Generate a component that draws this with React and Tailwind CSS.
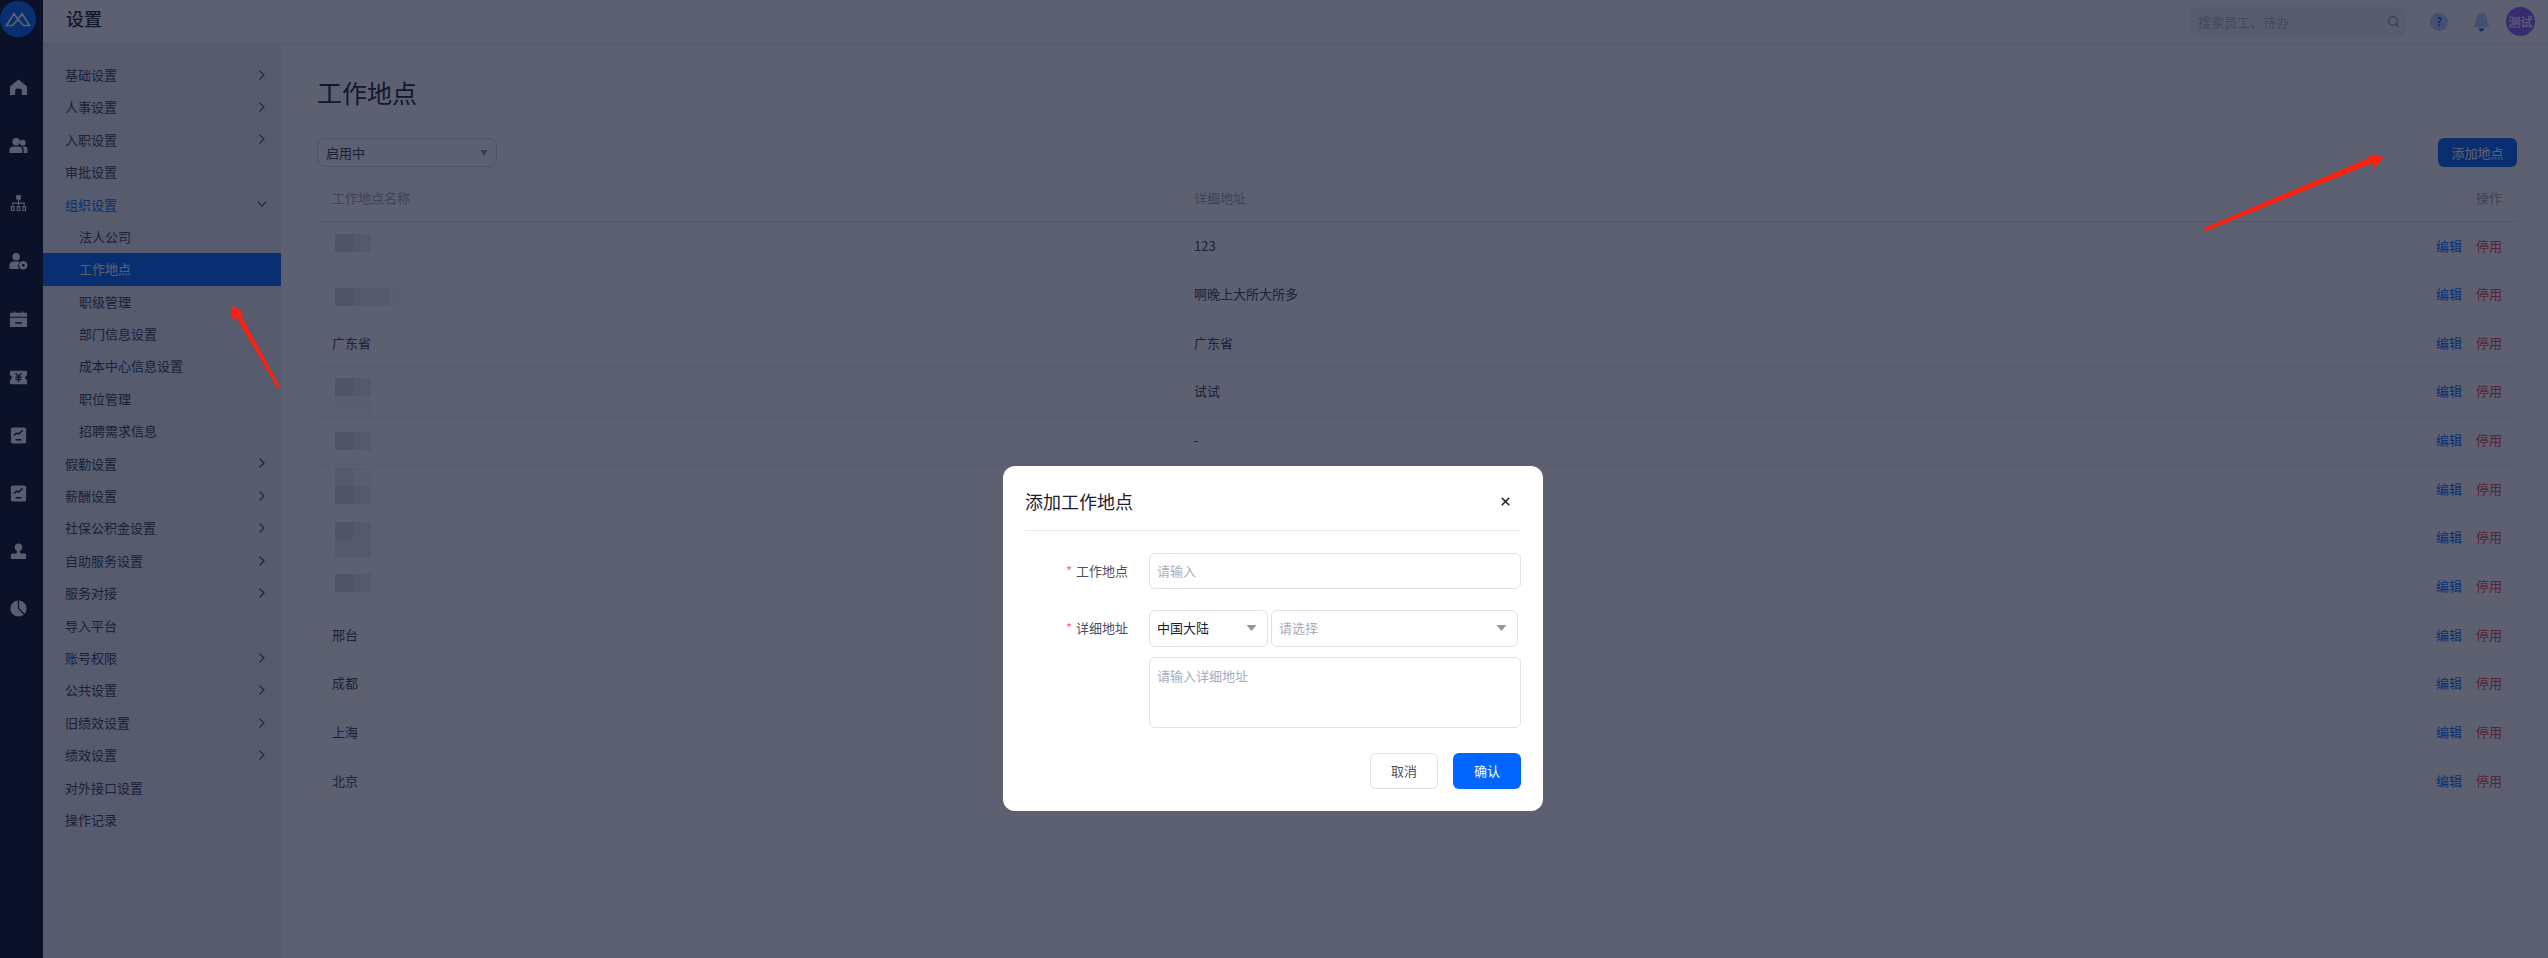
import { ChevronRight, ChevronDown, Search, X } from "lucide-react";

const menu = [
  { label: "基础设置", arrow: true },
  { label: "人事设置", arrow: true },
  { label: "入职设置", arrow: true },
  { label: "审批设置" },
  { label: "组织设置", open: true },
  { label: "法人公司", sub: true },
  { label: "工作地点", sub: true, active: true },
  { label: "职级管理", sub: true },
  { label: "部门信息设置", sub: true },
  { label: "成本中心信息设置", sub: true },
  { label: "职位管理", sub: true },
  { label: "招聘需求信息", sub: true },
  { label: "假勤设置", arrow: true },
  { label: "薪酬设置", arrow: true },
  { label: "社保公积金设置", arrow: true },
  { label: "自助服务设置", arrow: true },
  { label: "服务对接", arrow: true },
  { label: "导入平台" },
  { label: "账号权限", arrow: true },
  { label: "公共设置", arrow: true },
  { label: "旧绩效设置", arrow: true },
  { label: "绩效设置", arrow: true },
  { label: "对外接口设置" },
  { label: "操作记录" },
];

const D = "bg-[#d6d8dc]";
const M = "bg-[#e6e9ec]";
const F = "bg-[#f7f8f8]";

// addresses of the lower rows sit behind the dialog
const rows = [
  { address: "123", mask: [[D, M]], top: "top-[12px]" },
  { address: "啊晚上大所大所多", mask: [[D, M, M, F]], top: "top-[17px]" },
  { name: "广东省", address: "广东省" },
  { address: "试试", mask: [[D, M], [F, F]], top: "top-[10px]" },
  { address: "-", mask: [[D, M]], top: "top-[15px]" },
  { mask: [[M, F], [D, M]], top: "top-[3px]" },
  { mask: [[D, M], [M, M]], top: "top-[8px]" },
  { mask: [[D, M]], top: "top-[12px]" },
  { name: "邢台" },
  { name: "成都" },
  { name: "上海" },
  { name: "北京" },
];

function RailIcon({ children }) {
  return (
    <div className="h-[57.9px] flex items-center justify-center">
      <svg width="19" height="19" viewBox="0 0 20 20" fill="#f3f5fb">
        {children}
      </svg>
    </div>
  );
}

function Rail() {
  const cut = "#020a1e";
  return (
    <div className="w-[43px] shrink-0 bg-[#020a1e] flex flex-col pr-[7px]">
      <div className="w-[36px] h-[36px] mt-[1px] rounded-full bg-[#0066ff] flex items-center justify-center">
        <svg width="26" height="16" viewBox="0 0 26 16" fill="none" stroke="#fff" strokeWidth="1.7">
          <path d="M1.5 14.5 L9 2.5 L13 8.5 L17 2.5 L24.5 14.5 H18.5 L13 8.5 L7.5 14.5 Z" />
        </svg>
      </div>
      <div className="mt-[22px] flex flex-col">
        <RailIcon>
          <path d="M10 1.5 L18.5 8.5 Q19 9 19 10 V17 Q19 18 18 18 H13.5 V13.5 Q13.5 11 10 11 Q6.5 11 6.5 13.5 V18 H2 Q1 18 1 17 V10 Q1 9 1.5 8.5 Z" />
        </RailIcon>
        <RailIcon>
          <circle cx="7.5" cy="6" r="4" />
          <path d="M0.5 18 V15 Q0.5 11 5 11 H10 Q14 11 14 15 V18 Z" />
          <circle cx="14.5" cy="7" r="3" />
          <path d="M15.5 18 V14.5 Q15.5 12 13.5 11 H16 Q19.5 11 19.5 14.5 V18 Z" />
        </RailIcon>
        <RailIcon>
          <rect x="7.5" y="1" width="5" height="5" rx="1" />
          <path d="M9.4 6 H10.6 V9 H16.6 V12 H15.4 V10.2 H10.6 V12 H9.4 V10.2 H4.6 V12 H3.4 V9 H9.4 Z" />
          <path d="M2 12.5 H6 V18 H2 Z M3.2 14 V16.8 H4.8 V14 Z M8 12.5 H12 V18 H8 Z M9.2 14 V16.8 H10.8 V14 Z M14 12.5 H18 V18 H14 Z M15.2 14 V16.8 H16.8 V14 Z" fillRule="evenodd" />
        </RailIcon>
        <RailIcon>
          <circle cx="7.5" cy="5" r="4" />
          <path d="M0.5 18 V14 Q0.5 10 5 10 H10 Q11 10 11.5 10.5 Q9.5 12 9.5 14.5 Q9.5 16.5 11 18 Z" />
          <circle cx="15" cy="14" r="4.5" />
          <circle cx="15" cy="14" r="1.5" fill={cut} />
        </RailIcon>
        <RailIcon>
          <path d="M2 3 H5 V1.5 H6.5 V3 H13.5 V1.5 H15 V3 H18 Q19 3 19 4 V7 H1 V4 Q1 3 2 3 Z" />
          <path d="M1 8.2 H19 V17 Q19 18 18 18 H2 Q1 18 1 17 Z M6.5 13 V14.5 H13.5 V13 Z" fillRule="evenodd" />
        </RailIcon>
        <RailIcon>
          <path d="M1 4 Q1 3 2 3 H18 Q19 3 19 4 V7.5 Q17 8.2 17 10 Q17 11.8 19 12.5 V16 Q19 17 18 17 H2 Q1 17 1 16 V12.5 Q3 11.8 3 10 Q3 8.2 1 7.5 Z" />
          <path d="M7 5.5 L10 9 L13 5.5 M6.8 9.5 H13.2 M6.8 12 H13.2 M10 9 V15" fill="none" stroke={cut} strokeWidth="1.3" />
        </RailIcon>
        <RailIcon>
          <rect x="2" y="1.5" width="16" height="17" rx="2" />
          <path d="M5 10 L8 7.5 L10 8.5 L14.5 4.5 M7 14.5 H13" fill="none" stroke={cut} strokeWidth="1.5" />
        </RailIcon>
        <RailIcon>
          <rect x="2" y="1.5" width="16" height="17" rx="2" />
          <path d="M5 10 L8 7.5 L10 8.5 L14.5 4.5 M7 14.5 H13" fill="none" stroke={cut} strokeWidth="1.5" />
        </RailIcon>
        <RailIcon>
          <circle cx="10" cy="5.5" r="4" />
          <path d="M8.5 8 H11.5 L12 12 H16.5 Q18 12 18 13.5 V17 Q18 18 17 18 H3 Q2 18 2 17 V13.5 Q2 12 3.5 12 H8 Z" />
        </RailIcon>
        <RailIcon>
          <circle cx="10" cy="10" r="8.5" />
          <path d="M10 1.5 V10 L16 16" fill="none" stroke={cut} strokeWidth="1.3" />
        </RailIcon>
      </div>
    </div>
  );
}

function Sidebar() {
  return (
    <div className="w-[238px] shrink-0 bg-[#edeff3] pt-[15px] text-[13px]">
      {menu.map((m) => (
        <div
          key={m.label}
          className={`h-[32.4px] pb-[1px] flex items-center justify-between pr-[11px] ${m.sub ? "pl-[36px]" : "pl-[22px]"} ${m.active ? "bg-[#0066ff] text-white" : m.open ? "text-[#0066ff]" : "text-[#363b4c]"}`}
        >
          <span>{m.label}</span>
          {m.arrow && <ChevronRight size={16} strokeWidth={1.8} className="text-[#4a4f62]" />}
          {m.open && <ChevronDown size={16} strokeWidth={1.8} className="text-[#4a4f62]" />}
        </div>
      ))}
    </div>
  );
}

function Mosaic({ mask, top }) {
  return (
    <div className={`absolute left-[18px] ${top} flex flex-col`}>
      {mask.map((line, i) => (
        <div key={i} className="flex">
          {line.map((c, j) => (
            <div key={j} className={`w-[18px] h-[18px] ${c}`} />
          ))}
        </div>
      ))}
    </div>
  );
}

function Table() {
  return (
    <div className="text-[13px]">
      <div className="h-[55px] pt-[8px] flex items-center border-b border-[#dfe1e7] text-[#a3a7b3]">
        <div className="w-[877px] pl-[15px]">工作地点名称</div>
        <div className="flex-1">详细地址</div>
        <div className="pr-[15px]">操作</div>
      </div>
      {rows.map((r, i) => (
        <div
          key={i}
          className={`h-[48.65px] pb-[1px] flex items-center text-[#363b4c] ${i < rows.length - 1 ? "border-b border-[#f1f2f5]" : ""}`}
        >
          <div className="w-[877px] pl-[15px] h-full flex items-center relative">
            {r.name}
            {r.mask && <Mosaic mask={r.mask} top={r.top} />}
          </div>
          <div className="flex-1">{r.address}</div>
          <div className="pr-[15px] flex gap-[14px]">
            <span className="text-[#0066ff]">编辑</span>
            <span className="text-[#f0404f]">停用</span>
          </div>
        </div>
      ))}
    </div>
  );
}

function Caret({ width = 11 }) {
  return (
    <svg width={width} height="6" viewBox="0 0 10 6" preserveAspectRatio="none" fill="#9094a6">
      <path d="M0.5 0 H9.5 L5 6 Z" />
    </svg>
  );
}

function Dialog() {
  const field = "border border-[#dfe0ea] rounded-[6px] bg-white text-[13px]";
  return (
    <div className="absolute left-[1003px] top-[466px] w-[540px] h-[345px] bg-white rounded-[12px] px-[22px]">
      <div className="h-[64.5px] flex items-center justify-between border-b border-[#e8e9f0] pt-[8px]">
        <span className="text-[18px] text-[#1b2033]">添加工作地点</span>
        <X size={13} strokeWidth={3} className="text-[#1b2033] mr-[9px] mb-[1px]" />
      </div>
      <div className="mt-[22px] flex">
        <label className="w-[124px] pr-[21px] h-[36px] flex items-center justify-end text-[13px] text-[#4a4f62]">
          <span className="text-[#ff6b6b] mr-[4px]">*</span>工作地点
        </label>
        <input
          placeholder="请输入"
          className={`w-[372px] h-[36px] px-[7px] outline-none placeholder:text-[#a9adbb] ${field}`}
        />
      </div>
      <div className="mt-[21px] flex">
        <label className="w-[124px] pr-[21px] h-[37px] flex items-center justify-end text-[13px] text-[#4a4f62]">
          <span className="text-[#ff6b6b] mr-[4px]">*</span>详细地址
        </label>
        <div className="w-[372px]">
          <div className="flex gap-[3px]">
            <div className={`w-[119px] h-[37px] pl-[7px] pr-[10px] flex items-center justify-between text-[#1b2033] ${field}`}>
              <span>中国大陆</span>
              <Caret />
            </div>
            <div className={`w-[247px] h-[37px] pl-[7px] pr-[10px] flex items-center justify-between text-[#a9adbb] ${field}`}>
              <span>请选择</span>
              <Caret />
            </div>
          </div>
          <textarea
            placeholder="请输入详细地址"
            className={`block mt-[10px] w-[372px] h-[71px] px-[7px] py-[8px] resize-none outline-none placeholder:text-[#a9adbb] ${field}`}
          />
        </div>
      </div>
      <div className="mt-[25px] flex justify-end gap-[15px] text-[13px]">
        <button className="w-[68px] h-[36px] border border-[#dfe0ea] rounded-[6px] text-[#4a4f62]">取消</button>
        <button className="w-[68px] h-[36px] rounded-[6px] bg-[#0066ff] text-white">确认</button>
      </div>
    </div>
  );
}

export default function App() {
  return (
    <div className="relative w-[2548px] h-[958px] overflow-hidden flex bg-white [font-family:'Noto_Sans_CJK_SC','Liberation_Sans',sans-serif]">
      <Rail />
      <div className="flex-1 flex flex-col">
        <div className="h-[44px] shrink-0 flex items-center border-b border-[#e4e6eb] pl-[23px] pr-[13px]">
          <span className="text-[18px] font-medium text-[#1b2033] mb-[6px]">设置</span>
          <div className="ml-auto w-[216px] h-[29px] bg-[#f0f2f6] rounded-[8px] pl-[8px] pr-[6px] flex items-center justify-between text-[13px] text-[#b3b7c2]">
            <span>搜索员工、待办</span>
            <Search size={13} strokeWidth={2.2} className="text-[#8c91a0]" />
          </div>
          <div className="ml-[24px] w-[18px] h-[18px] rounded-full bg-[#b4ccf8] flex items-center justify-center text-[11px] font-bold text-[#0066ff]">?</div>
          <svg className="ml-[25px]" width="17" height="20" viewBox="0 0 17 20">
            <path d="M8.5 1 Q13.5 1 14 7 Q14 12 16.5 14.5 V15.5 H0.5 V14.5 Q3 12 3 7 Q3.5 1 8.5 1 Z" fill="#b4ccf8" />
            <path d="M5.5 16.5 H11.5 Q10.5 19.5 8.5 19.5 Q6.5 19.5 5.5 16.5 Z" fill="#0066ff" />
          </svg>
          <div className="ml-[16px] w-[29px] h-[29px] rounded-full bg-[#8f5fff] flex items-center justify-center text-[12px] font-medium text-white">测试</div>
        </div>
        <div className="flex-1 flex">
          <Sidebar />
          <div className="flex-1 pl-[36px] pr-[31px]">
            <h1 className="pt-[32px] text-[25px] leading-[32px] text-[#1b2033]">工作地点</h1>
            <div className="mt-[30px] h-[29px] flex items-center justify-between">
              <div className="w-[180px] h-[29px] border border-[#d5d7df] rounded-[8px] px-[8px] flex items-center justify-between text-[13px] text-[#363b4c]">
                <span>启用中</span>
                <Caret width={8} />
              </div>
              <button className="w-[79px] h-[29px] rounded-[6px] bg-[#0066ff] text-white text-[13px]">添加地点</button>
            </div>
            <Table />
          </div>
        </div>
      </div>
      <div className="absolute inset-0 bg-[rgba(15,20,45,0.68)]" />
      <Dialog />
      <svg className="absolute inset-0 pointer-events-none" width="2548" height="958">
        <polygon points="2204,228 2369,158 2368,155 2384,157 2374,169 2372,163 2206,231" fill="#ff2010" />
        <polygon points="280,387 241,315 244,313 232,306 232,320 236,317 278,389" fill="#ff2010" />
      </svg>
    </div>
  );
}
